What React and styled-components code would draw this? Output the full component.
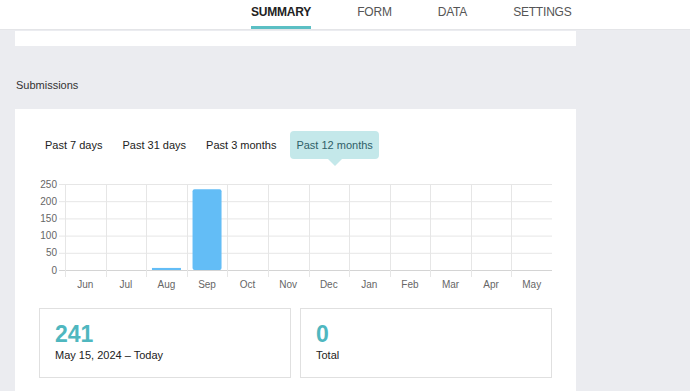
import * as React from 'react'
import styled, { createGlobalStyle } from 'styled-components'

const GlobalStyle = createGlobalStyle`
  html, body {
    margin: 0;
    padding: 0;
    background: #ebecf0;
    font-family: "Liberation Sans", Arial, sans-serif;
    color: #222;
  }
`

const Page = styled.div`
  width: 690px;
  height: 391px;
  overflow: hidden;
`

const Header = styled.header`
  height: 29px;
  background: #fff;
  border-bottom: 1px solid #e4e5e8;
  display: flex;
  padding-left: 228px;
`

const Tab = styled.div`
  position: relative;
  padding: 0 23px;
  display: flex;
  align-items: center;
  height: 100%;
  font-size: 12px;
  letter-spacing: -0.2px;
  font-weight: ${(p) => (p.$active ? 700 : 400)};
  color: ${(p) => (p.$active ? '#222' : '#555')};
  padding-bottom: 6px;
  box-sizing: border-box;

  &::after {
    content: '';
    display: ${(p) => (p.$active ? 'block' : 'none')};
    position: absolute;
    left: 23px;
    right: 23px;
    bottom: 0;
    height: 3px;
    background: #5bbfc4;
  }
`

const Content = styled.main`
  width: 561px;
  margin-left: 15px;
  display: flex;
  flex-direction: column;
`

const TopCard = styled.div`
  margin-top: 1px;
  height: 15px;
  background: #fff;
`

const SectionTitle = styled.div`
  margin: 32px 0 17px 1px;
  font-size: 11px;
  line-height: 14px;
  color: #333;
`

const Card = styled.section`
  background: #fff;
  padding: 22px 24px 30px;
`

const Periods = styled.div`
  display: flex;
  gap: 8px;
`

const Period = styled.div`
  position: relative;
  height: 28px;
  padding: 0 6px;
  display: flex;
  align-items: center;
  font-size: 11px;
  border-radius: 4px;
  color: ${(p) => (p.$active ? '#2f6068' : '#222')};
  background: ${(p) => (p.$active ? '#c4e8ea' : 'transparent')};

  &::after {
    content: '';
    display: ${(p) => (p.$active ? 'block' : 'none')};
    position: absolute;
    left: 50%;
    top: 100%;
    margin-left: -7px;
    border-left: 7px solid transparent;
    border-right: 7px solid transparent;
    border-top: 7px solid #c4e8ea;
  }
`

const ChartWrap = styled.div`
  margin-top: 17px;
  height: 116px;
`

const Stats = styled.div`
  margin-top: 16px;
  display: grid;
  grid-template-columns: 1fr 1fr;
  gap: 9px;
`

const StatBox = styled.div`
  height: 70px;
  box-sizing: border-box;
  border: 1px solid #e0e0e0;
  padding: 12px 15px;
`

const StatValue = styled.div`
  font-size: 23px;
  font-weight: 700;
  line-height: 26px;
  color: #4fb7bf;
`

const StatLabel = styled.div`
  margin-top: 2px;
  font-size: 11px;
  color: #222;
`

const months = ['Jun', 'Jul', 'Aug', 'Sep', 'Oct', 'Nov', 'Dec', 'Jan', 'Feb', 'Mar', 'Apr', 'May']
const counts = [0, 0, 6, 235, 0, 0, 0, 0, 0, 0, 0, 0]
const ticks = [0, 50, 100, 150, 200, 250]

function Chart() {
  const left = 26
  const right = 513
  const top = 8
  const bottom = 94
  const colW = (right - left) / 12
  const y = (v) => bottom - (v / 250) * (bottom - top)
  return (
    <svg width="513" height="116" viewBox="0 0 513 116">
      {ticks.map((t) => (
        <g key={t}>
          <line x1={left - 6} x2={right} y1={y(t) + 0.5} y2={y(t) + 0.5} stroke={t === 0 ? '#d4d4d4' : '#e6e6e6'} />
          <text x={18} y={y(t) + 3.5} fontSize="10" fill="#666" textAnchor="end" fontFamily="Liberation Sans, Arial, sans-serif">
            {t}
          </text>
        </g>
      ))}
      {Array.from({ length: 13 }).map((_, i) => (
        <line key={i} x1={Math.round(left + i * colW) + 0.5} x2={Math.round(left + i * colW) + 0.5} y1={top} y2={bottom + 7} stroke="#e6e6e6" />
      ))}
      {counts.map((c, i) => {
        if (!c) return null
        const cx = left + i * colW + colW / 2
        const h = bottom - y(c)
        return <rect key={i} x={cx - 14.5} y={y(c)} width="29" height={h} rx={h > 4 ? 2 : 0} fill="#63bdf6" />
      })}
      {months.map((m, i) => (
        <text key={m} x={left + i * colW + colW / 2} y={111.5} fontSize="10" fill="#666" textAnchor="middle" fontFamily="Liberation Sans, Arial, sans-serif">
          {m}
        </text>
      ))}
    </svg>
  )
}

export default function App() {
  return (
    <Page>
      <GlobalStyle />
      <Header>
        <Tab $active>SUMMARY</Tab>
        <Tab>FORM</Tab>
        <Tab>DATA</Tab>
        <Tab>SETTINGS</Tab>
      </Header>
      <Content>
        <TopCard />
        <SectionTitle>Submissions</SectionTitle>
        <Card>
          <Periods>
            <Period>Past 7 days</Period>
            <Period>Past 31 days</Period>
            <Period>Past 3 months</Period>
            <Period $active>Past 12 months</Period>
          </Periods>
          <ChartWrap>
            <Chart />
          </ChartWrap>
          <Stats>
            <StatBox>
              <StatValue>241</StatValue>
              <StatLabel>May 15, 2024 – Today</StatLabel>
            </StatBox>
            <StatBox>
              <StatValue>0</StatValue>
              <StatLabel>Total</StatLabel>
            </StatBox>
          </Stats>
        </Card>
      </Content>
    </Page>
  )
}
